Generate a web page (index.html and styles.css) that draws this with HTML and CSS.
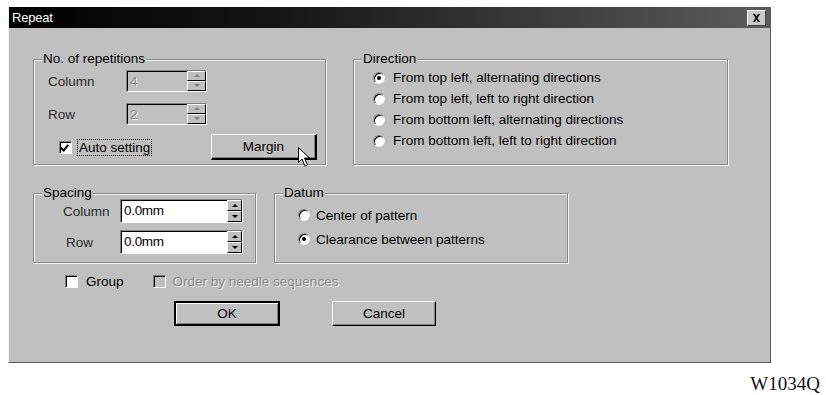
FILE: index.html
```html
<!DOCTYPE html>
<html>
<head>
    <title>Repeat</title>
    <meta charset="UTF-8">
    <link rel="stylesheet" href="styles.css">
</head>
<body>
    <div class="page">
        <div class="dialog">
            <div class="titlebar">
                <span class="title">Repeat</span>
                <span class="close">
                    <svg width="9" height="8" viewBox="0 0 9 8"><path d="M1 0h2l1.5 2.5L6 0h2L5.5 4 8 8H6L4.5 5.5 3 8H1l2.5-4z" fill="#000"/></svg>
                </span>
            </div>
            <div class="body">
                <div class="row row-top">
                    <fieldset class="group reps">
                        <legend>No. of repetitions</legend>
                        <div class="group-body">
                            <div class="field">
                                <span class="label">Column</span>
                                <div class="spin disabled"><span class="value">4</span><span class="arrows"><i class="up"></i><i class="down"></i></span></div>
                            </div>
                            <div class="field">
                                <span class="label">Row</span>
                                <div class="spin disabled"><span class="value">2</span><span class="arrows"><i class="up"></i><i class="down"></i></span></div>
                            </div>
                            <div class="auto-row">
                                <span class="check checked"></span>
                                <span class="focus">Auto setting</span>
                                <button class="btn margin">Margin
                                    <svg class="cursor" width="13" height="21" viewBox="0 0 13 21"><path d="M0.5 0.5v15l3.5-3.5 3 7 2.5-1-3-7h5z" fill="#fff" stroke="#000"/></svg>
                                </button>
                            </div>
                        </div>
                    </fieldset>
                    <fieldset class="group direction">
                        <legend>Direction</legend>
                        <div class="group-body">
                            <div class="radio-row"><span class="radio on"></span>From top left, alternating directions</div>
                            <div class="radio-row"><span class="radio"></span>From top left, left to right direction</div>
                            <div class="radio-row"><span class="radio"></span>From bottom left, alternating directions</div>
                            <div class="radio-row"><span class="radio"></span>From bottom left, left to right direction</div>
                        </div>
                    </fieldset>
                </div>
                <div class="row row-mid">
                    <fieldset class="group spacing">
                        <legend>Spacing</legend>
                        <div class="group-body">
                            <div class="field">
                                <span class="label">Column</span>
                                <div class="spin wide"><span class="value">0.0mm</span><span class="arrows"><i class="up"></i><i class="down"></i></span></div>
                            </div>
                            <div class="field">
                                <span class="label indent">Row</span>
                                <div class="spin wide"><span class="value">0.0mm</span><span class="arrows"><i class="up"></i><i class="down"></i></span></div>
                            </div>
                        </div>
                    </fieldset>
                    <fieldset class="group datum">
                        <legend>Datum</legend>
                        <div class="group-body">
                            <div class="radio-row"><span class="radio"></span>Center of pattern</div>
                            <div class="radio-row"><span class="radio on"></span>Clearance between patterns</div>
                        </div>
                    </fieldset>
                </div>
                <div class="checks">
                    <span class="check"></span><span class="check-label">Group</span>
                    <span class="check off"></span><span class="check-label muted">Order by needle sequences</span>
                </div>
                <div class="buttons">
                    <button class="btn default">OK</button>
                    <button class="btn cancel">Cancel</button>
                </div>
            </div>
        </div>
        <div class="code">W1034Q</div>
    </div>
</body>
</html>
```

FILE: styles.css
```css
body {
    margin: 0;
    background: #fff;
    font-family: "Liberation Sans", Arial, sans-serif;
    font-size: 13.5px;
    color: #000;
}
.page {
    padding: 7px 0 0 8px;
}
.dialog {
    width: 763px;
    height: 356px;
    box-sizing: border-box;
    background: #c0c0c0;
    border-left: 1px solid #f2f2f2;
    border-right: 1px solid #5a5a5a;
    border-bottom: 1px solid #5a5a5a;
}
.titlebar {
    height: 21px;
    display: flex;
    align-items: center;
    justify-content: space-between;
    padding: 0 4px 0 3px;
    background: linear-gradient(to right, #000 0%, #151515 35%, #5c5c5c 100%);
    color: #fff;
}
.title {
    font-size: 13px;
    letter-spacing: -0.2px;
}
.close {
    width: 19px;
    height: 16px;
    box-sizing: border-box;
    display: flex;
    align-items: center;
    justify-content: center;
    background: #c8c8c8;
    border-top: 1px solid #fff;
    border-left: 1px solid #fff;
    border-right: 1px solid #444;
    border-bottom: 1px solid #444;
}
.body {
    padding: 25px 0 0 24px;
}
.row {
    display: flex;
}
.row-top {
    gap: 27px;
}
.row-mid {
    gap: 18px;
    margin-top: 22px;
}
.group {
    margin: 0;
    padding: 0;
    min-width: 0;
    box-sizing: border-box;
    border: 1px solid #8a8a8a;
    box-shadow: 1px 1px 0 #f4f4f4, inset 1px 1px 0 #f4f4f4;
}
.group legend {
    margin-left: 8px;
    padding: 0 1px;
    line-height: 12px;
    background: #c0c0c0;
}
.reps {
    width: 293px;
    height: 112px;
}
.reps .group-body {
    padding: 5px 8px 0 14px;
}
.direction {
    width: 375px;
    height: 112px;
}
.direction .group-body {
    padding: 2px 0 0 19px;
}
.spacing {
    width: 223px;
    height: 76px;
}
.spacing .group-body {
    padding: 0 0 0 29px;
}
.datum {
    width: 294px;
    height: 76px;
}
.datum .group-body {
    padding: 5px 0 0 23px;
}
.field {
    display: flex;
    align-items: center;
    height: 22px;
    margin-bottom: 11px;
}
.label {
    width: 78px;
    color: #2a2a2a;
}
.spacing .field {
    height: 24px;
    margin-bottom: 7px;
}
.spacing .label {
    width: 57px;
}
.label.indent {
    padding-left: 3px;
    width: 54px;
}
.spin {
    display: flex;
    height: 100%;
    box-sizing: border-box;
    border-top: 1px solid #808080;
    border-left: 1px solid #808080;
    border-right: 1px solid #fff;
    border-bottom: 1px solid #fff;
}
.spin .value {
    width: 60px;
    box-sizing: border-box;
    padding: 2px 0 0 2px;
    background: #fff;
    border-top: 1px solid #000;
    border-left: 1px solid #000;
}
.spin.disabled .value {
    background: #c0c0c0;
    color: #8a8a8a;
    text-shadow: 1px 1px 0 #eee;
}
.spin.wide .value {
    width: 106px;
    letter-spacing: -0.3px;
}
.arrows {
    display: flex;
    flex-direction: column;
    width: 19px;
}
.spin.wide .arrows {
    width: 15px;
}
.arrows i {
    flex: 1;
    position: relative;
    background: #c0c0c0;
    border-top: 1px solid #fff;
    border-left: 1px solid #fff;
    border-right: 1px solid #000;
    border-bottom: 1px solid #000;
}
.arrows i::after {
    content: "";
    position: absolute;
    left: 50%;
    top: 50%;
    margin: -2px 0 0 -3px;
    border-left: 3px solid transparent;
    border-right: 3px solid transparent;
}
.arrows .up::after {
    border-bottom: 3px solid #000;
}
.arrows .down::after {
    border-top: 3px solid #000;
}
.spin.disabled .arrows i::after {
    border-top-color: #808080;
    border-bottom-color: #808080;
}
.auto-row {
    display: flex;
    align-items: center;
    height: 26px;
    margin-top: -2px;
}
.check {
    width: 13px;
    height: 13px;
    flex: none;
    box-sizing: border-box;
    background: #fff;
    border-top: 1px solid #808080;
    border-left: 1px solid #808080;
    border-right: 1px solid #fff;
    border-bottom: 1px solid #fff;
    box-shadow: inset 1px 1px 0 #000;
    position: relative;
}
.check.checked::after {
    content: "";
    position: absolute;
    left: 2px;
    top: 1px;
    width: 3px;
    height: 6px;
    border-right: 2px solid #000;
    border-bottom: 2px solid #000;
    transform: rotate(40deg);
}
.check.off {
    background: #c0c0c0;
}
.auto-row .check {
    margin-left: 11px;
}
.focus {
    margin-left: 5px;
    padding: 0 1px;
    border: 1px dotted #000;
}
.btn {
    font-family: inherit;
    font-size: 13.5px;
    color: #000;
    background: #c0c0c0;
    box-sizing: border-box;
    border-top: 1px solid #fff;
    border-left: 1px solid #fff;
    border-right: 1px solid #000;
    border-bottom: 1px solid #000;
    box-shadow: inset -1px -1px 0 #808080;
    padding: 0;
}
.btn.margin {
    position: relative;
    margin-left: auto;
    width: 106px;
    height: 26px;
    border-right-width: 2px;
    border-bottom-width: 2px;
}
.cursor {
    position: absolute;
    left: 86px;
    top: 12px;
}
.radio-row {
    display: flex;
    align-items: center;
    height: 21px;
}
.datum .radio-row {
    height: 22px;
    margin-bottom: 2px;
}
.radio {
    width: 12px;
    height: 12px;
    flex: none;
    box-sizing: border-box;
    border-radius: 50%;
    margin-right: 8px;
    background: #fff;
    border-top: 1px solid #808080;
    border-left: 1px solid #808080;
    border-right: 1px solid #eee;
    border-bottom: 1px solid #eee;
    box-shadow: inset 1px 1px 0 #000;
    position: relative;
}
.datum .radio {
    margin-right: 6px;
}
.radio.on::after {
    content: "";
    position: absolute;
    left: 3px;
    top: 3px;
    width: 4px;
    height: 4px;
    border-radius: 50%;
    background: #000;
}
.checks {
    display: flex;
    align-items: center;
    height: 14px;
    margin-top: 11px;
    padding-left: 32px;
}
.check-label {
    margin-left: 8px;
    margin-right: 29px;
}
.check-label.muted {
    margin-left: 7px;
    color: #8c8c8c;
    text-shadow: 1px 1px 0 #eee;
}
.buttons {
    display: flex;
    gap: 52px;
    margin-top: 13px;
    padding-left: 141px;
}
.btn.default {
    width: 106px;
    height: 25px;
    border: 2px solid #000;
    box-shadow: inset 1px 1px 0 #fff, inset -1px -1px 0 #808080;
}
.btn.cancel {
    width: 104px;
    height: 25px;
}
.code {
    width: 812px;
    margin-top: 10px;
    text-align: right;
    font-family: "Liberation Serif", "Times New Roman", serif;
    font-size: 19px;
    color: #111;
}
```
